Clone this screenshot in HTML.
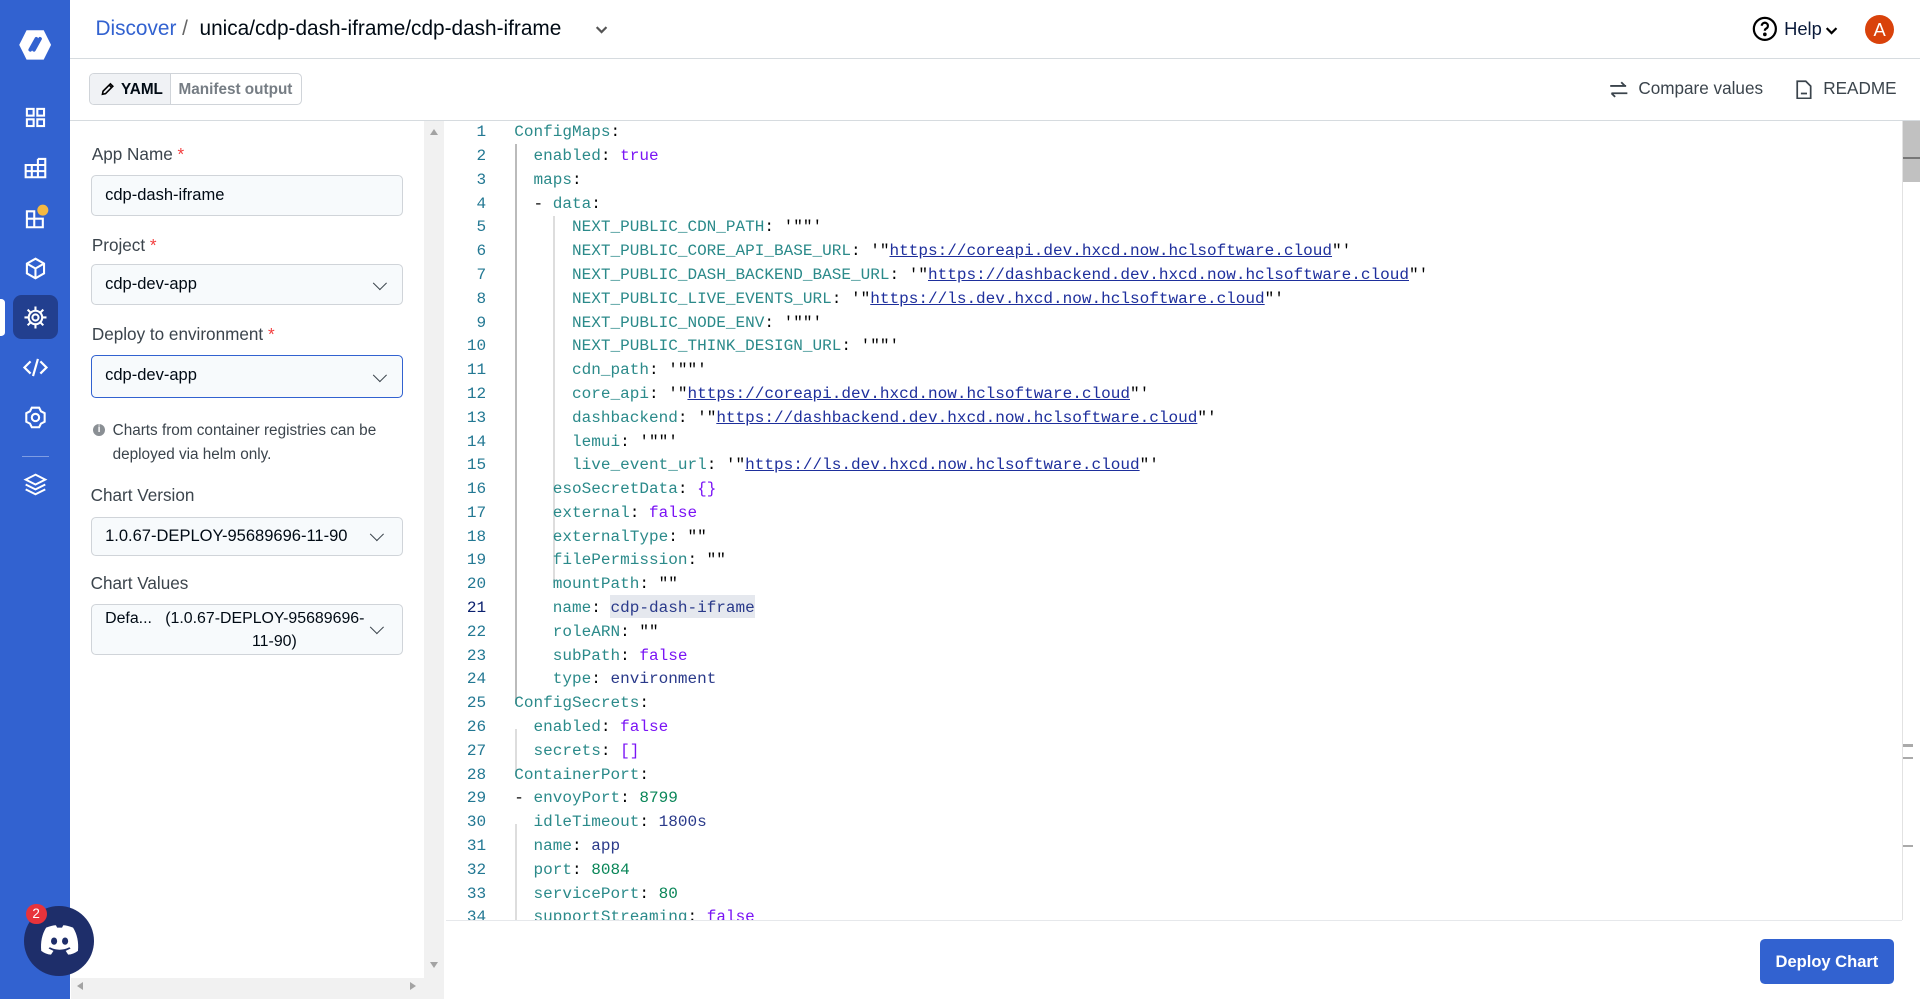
<!DOCTYPE html>
<html><head><meta charset="utf-8">
<style>
*{box-sizing:border-box;margin:0;padding:0}
html,body{width:1920px;height:999px;overflow:hidden;background:#fff}
#w{width:1568px;height:816px;position:relative;zoom:1.22449;font-family:"Liberation Sans",sans-serif;color:#000a14}
.abs{position:absolute}
#side{left:0;top:0;width:57px;height:816px;background:#3262d0}
.ic{position:absolute;left:18px;width:22px;height:22px}
#hdr{left:57px;top:0;right:0;height:48px;border-bottom:1px solid #d6dbdf}
#tb{left:57px;top:48px;right:0;height:51px;border-bottom:1px solid #d6dbdf}
.lbl{position:absolute;left:75px;font-size:14px;color:#3b444c}
.lbl b{color:#f33e3e;font-weight:normal}
.inp{position:absolute;left:74px;width:255px;border:1px solid #d0d4d9;border-radius:4px;background:#f7fafc;font-size:13.5px;color:#000a14;padding-left:11px}
.chev{position:absolute;right:14px;top:50%;width:8px;height:8px;border-right:1.6px solid #3b444c;border-bottom:1.6px solid #3b444c;transform:translateY(-70%) rotate(45deg)}
#code{left:364px;top:99px;width:1189px;height:652px;overflow:hidden;font-family:"Liberation Mono",monospace;font-size:13.1px}
.ln{position:absolute;left:0;width:33px;text-align:right;color:#237893}
.cl{position:absolute;left:56px;white-space:pre;color:#2b8a8a}
.k{color:#2b8a8a}.p{color:#000}.b{color:#7a14f5}.s{color:#2a3a8a}.n{color:#098658}.u{color:#1e2f9c;text-decoration:underline}
.g{position:absolute;width:1px;background:#bbb}
</style></head><body><div id="w">
<div id="side" class="abs">
 <svg class="abs" style="left:15px;top:24px" width="28" height="26" viewBox="0 0 28 26"><path d="M7 1h14l6 12-6 12H7L1 13z" fill="#fff"/><path d="M10 17l5-9M13 17l5-9" stroke="#3262d0" stroke-width="3" stroke-linecap="round"/></svg>
 <svg class="ic" style="top:85px" viewBox="0 0 22 22" fill="none" stroke="#fff" stroke-width="1.7"><rect x="4" y="4" width="5.5" height="5.5"/><rect x="12.5" y="4" width="5.5" height="5.5"/><rect x="4" y="12.5" width="5.5" height="5.5"/><rect x="12.5" y="12.5" width="5.5" height="5.5"/></svg>
 <svg class="ic" style="top:126px" viewBox="0 0 22 22" fill="none" stroke="#fff" stroke-width="1.7"><path d="M3 9h16v10H3zM3 14h16M8 9v10M13 9v10M13 4h6v5M13 4v5"/></svg>
 <svg class="ic" style="top:167px" viewBox="0 0 22 22" fill="none" stroke="#fff" stroke-width="1.7"><path d="M4 6h6v6H4zM10 12h7v7h-7zM4 12v7h6"/><circle cx="17" cy="5" r="4.5" fill="#f5b942" stroke="none"/></svg>
 <svg class="ic" style="top:208px" viewBox="0 0 22 22" fill="none" stroke="#fff" stroke-width="1.7"><path d="M11 3l7 4v8l-7 4-7-4V7zM4 7l7 4 7-4M11 11v8"/></svg>
 <div class="abs" style="left:0;top:244px;width:4px;height:30px;background:#fff;border-radius:0 3px 3px 0"></div>
 <div class="abs" style="left:11px;top:241px;width:36px;height:36px;background:#223f8f;border-radius:7px"></div>
 <svg class="ic" style="top:248px" viewBox="0 0 22 22" fill="none" stroke="#fff" stroke-width="1.7"><circle cx="11" cy="11" r="5.5"/><circle cx="11" cy="11" r="2.5"/><path d="M11 2v3.5M11 16.5V20M2 11h3.5M16.5 11H20M4.6 4.6l2.5 2.5M14.9 14.9l2.5 2.5M4.6 17.4l2.5-2.5M14.9 7.1l2.5-2.5"/></svg>
 <svg class="ic" style="top:289px" viewBox="0 0 22 22" fill="none" stroke="#fff" stroke-width="1.8"><path d="M7 6l-5 5 5 5M15 6l5 5-5 5M13 4l-4 14"/></svg>
 <svg class="ic" style="top:330px" viewBox="0 0 22 22" fill="none" stroke="#fff" stroke-width="1.7"><path d="M8 3h6l1.5 3 3 1.5v7l-3 1.5L14 19H8l-1.5-3-3-1.5v-7l3-1.5z"/><circle cx="11" cy="11" r="3"/></svg>
 <div class="abs" style="left:18px;top:372px;width:22px;height:1px;background:#7f9de3"></div>
 <svg class="ic" style="top:385px" viewBox="0 0 22 22" fill="none" stroke="#fff" stroke-width="1.6"><path d="M11 3l8 4-8 4-8-4zM3 11l8 4 8-4M3 15l8 4 8-4"/></svg>
 <div class="abs" style="left:20px;top:740px;width:57px;height:57px;border-radius:50%;background:#1e2e6a"></div>
 <svg class="abs" style="left:33px;top:755px" width="32" height="26" viewBox="0 0 32 26"><path d="M5 3q5-2 8-2l1 2h4l1-2q3 0 8 2 5 8 4 19-4 3-8 3l-2-3 4-2-1-1q-8 4-16 0l-1 1 4 2-2 3q-4 0-8-3Q0 11 5 3z" fill="#fff"/><ellipse cx="11.5" cy="14" rx="2.5" ry="3" fill="#1e2e6a"/><ellipse cx="20.5" cy="14" rx="2.5" ry="3" fill="#1e2e6a"/></svg>
 <div class="abs" style="left:21px;top:738px;width:17px;height:17px;border-radius:50%;background:#e8333b;color:#fff;font-size:11px;text-align:center;line-height:17px">2</div>
</div>
<div id="hdr" class="abs">
 <div class="abs" style="left:21px;top:14px;font-size:17px;white-space:nowrap"><span style="color:#3262d0">Discover</span> <span style="color:#666">/</span>&nbsp; <span style="color:#000a14">unica/cdp-dash-iframe/cdp-dash-iframe</span></div>
 <svg class="abs" style="left:427px;top:17px" width="14" height="14" viewBox="0 0 14 14" fill="none" stroke="#555" stroke-width="1.8"><path d="M3 5l4 4 4-4"/></svg>
 <svg class="abs" style="left:1374px;top:13px" width="21" height="21" viewBox="0 0 21 21" fill="none" stroke="#000" stroke-width="1.8"><circle cx="10.5" cy="10.5" r="9"/><path d="M8 8a2.5 2.5 0 1 1 3.5 2.3c-.7.4-1 .8-1 1.7"/><circle cx="10.5" cy="15" r=".6" fill="#000"/></svg>
 <div class="abs" style="left:1400px;top:15px;font-size:15px;color:#0a1a3a">Help</div>
 <svg class="abs" style="left:1432px;top:18px" width="14" height="14" viewBox="0 0 14 14" fill="none" stroke="#000" stroke-width="1.8"><path d="M3 5l4 4 4-4"/></svg>
 <div class="abs" style="left:1466px;top:12px;width:24px;height:24px;border-radius:50%;background:#d9420b;color:#fff;font-size:15px;text-align:center;line-height:24px">A</div>
</div>
<div id="tb" class="abs">
 <div class="abs" style="left:16px;top:12px;width:174px;height:26px;border:1px solid #d0d4d9;border-radius:4px;overflow:hidden;font-size:12.5px;white-space:nowrap">
  <div class="abs" style="left:0;top:0;width:66px;height:26px;background:#f0f2f5;border-right:1px solid #d0d4d9;font-weight:bold;padding:5px 0 0 25px;color:#000a14">YAML</div>
  <svg class="abs" style="left:8px;top:6px" width="12" height="12" viewBox="0 0 12 12" fill="none" stroke="#000" stroke-width="1.3"><path d="M2 10l.5-2.5 6-6 2 2-6 6zM7.5 2.5l2 2"/></svg>
  <div class="abs" style="left:72px;top:5px;color:#767d84;font-weight:bold">Manifest output</div>
 </div>
 <svg class="abs" style="left:1257px;top:18px" width="16" height="14" viewBox="0 0 16 14" fill="none" stroke="#3b444c" stroke-width="1.5"><path d="M1 4h13M10 1l3 3M15 10H2M5 13l-3-3"/></svg>
 <div class="abs" style="left:1281px;top:16px;font-size:14px;color:#3b444c">Compare values</div>
 <svg class="abs" style="left:1410px;top:17px" width="13" height="16" viewBox="0 0 13 16" fill="none" stroke="#3b444c" stroke-width="1.4"><path d="M1 1h7l4 4v10H1zM4 11h5"/></svg>
 <div class="abs" style="left:1432px;top:16px;font-size:14px;color:#3b444c">README</div>
</div>
<div class="lbl" style="top:118px">App Name <b>*</b></div>
<div class="inp" style="top:143px;height:33px;line-height:31px">cdp-dash-iframe</div>
<div class="lbl" style="top:192px">Project <b>*</b></div>
<div class="inp" style="top:216px;height:33px;line-height:31px">cdp-dev-app<span class="chev"></span></div>
<div class="lbl" style="top:265px">Deploy to environment <b>*</b></div>
<div class="inp" style="top:290px;height:35px;line-height:31px;border:1.5px solid #3262d0">cdp-dev-app<span class="chev"></span></div>
<div class="abs" style="left:76px;top:346px;width:10px;height:10px;border-radius:50%;background:#8a8f94;color:#fff;font-size:8px;text-align:center;line-height:10px;font-weight:bold">i</div>
<div class="abs" style="left:92px;top:342px;font-size:12.5px;color:#3b444c;line-height:20px;width:240px">Charts from container registries can be deployed via helm only.</div>
<div class="lbl" style="top:396px;left:74px">Chart Version</div>
<div class="inp" style="top:422px;height:32px;line-height:30px">1.0.67-DEPLOY-95689696-11-90<span class="chev" style="right:16px"></span></div>
<div class="lbl" style="top:468px;left:74px">Chart Values</div>
<div class="inp" style="top:493px;height:42px;font-size:13px;line-height:19px;padding-top:2px"><span>Defa...&nbsp;&nbsp;&nbsp;(1.0.67-DEPLOY-95689696-</span><br><span style="padding-left:120px">11-90)</span><span class="chev" style="right:16px"></span></div>
<div class="abs" style="left:346px;top:99px;width:17px;height:717px;background:#f1f1f1"></div>
<div class="abs" style="left:351px;top:105px;width:0;height:0;border:4px solid transparent;border-bottom:5px solid #a3a3a3;border-top:0"></div>
<div class="abs" style="left:351px;top:786px;width:0;height:0;border:4px solid transparent;border-top:5px solid #a3a3a3;border-bottom:0"></div>
<div class="abs" style="left:58px;top:799px;width:288px;height:17px;background:#f1f1f1"></div>
<div class="abs" style="left:63px;top:802px;border:4px solid transparent;border-right:5px solid #a3a3a3;border-left:0"></div>
<div class="abs" style="left:335px;top:802px;border:4px solid transparent;border-left:5px solid #a3a3a3;border-right:0"></div>
<div id="code" class="abs">
<div class="g" style="left:57px;top:19px;height:457px"></div>
<div class="g" style="left:88px;top:77px;height:300px;background:#ddd"></div>
<div class="g" style="left:57px;top:496px;height:39px;background:#ddd"></div>
<div class="g" style="left:57px;top:574px;height:78px;background:#ddd"></div>
<div class="abs" style="left:134px;top:387px;width:119px;height:19px;background:#e5e8ee"></div>
</div>
<div class="abs" style="left:364px;top:751px;width:1189px;height:1px;background:#e6e8eb"></div>
<div class="abs" style="left:1553px;top:99px;width:15px;height:652px;border-left:1px solid #e2e2e2"></div>
<div class="abs" style="left:1554px;top:99px;width:14px;height:50px;background:#c1c1c1"></div>
<div class="abs" style="left:1554px;top:128px;width:14px;height:2px;background:#777"></div>
<div class="abs" style="left:1554px;top:608px;width:8px;height:2px;background:#aaa"></div>
<div class="abs" style="left:1554px;top:618px;width:8px;height:2px;background:#aaa"></div>
<div class="abs" style="left:1554px;top:690px;width:8px;height:2px;background:#aaa"></div>
<div class="abs" style="left:1437px;top:767px;width:110px;height:37px;background:#3262d0;border-radius:4px;color:#fff;font-size:13.5px;font-weight:bold;text-align:center;line-height:37px">Deploy Chart</div>
<script>
var L=[
'<span class="k">ConfigMaps</span><span class="p">:</span>',
'  <span class="k">enabled</span><span class="p">:</span> <span class="b">true</span>',
'  <span class="k">maps</span><span class="p">:</span>',
'  <span class="p">-</span> <span class="k">data</span><span class="p">:</span>',
'      <span class="k">NEXT_PUBLIC_CDN_PATH</span><span class="p">: \'""\'</span>',
'      <span class="k">NEXT_PUBLIC_CORE_API_BASE_URL</span><span class="p">: \'"</span><span class="u">https://coreapi.dev.hxcd.now.hclsoftware.cloud</span><span class="p">"\'</span>',
'      <span class="k">NEXT_PUBLIC_DASH_BACKEND_BASE_URL</span><span class="p">: \'"</span><span class="u">https://dashbackend.dev.hxcd.now.hclsoftware.cloud</span><span class="p">"\'</span>',
'      <span class="k">NEXT_PUBLIC_LIVE_EVENTS_URL</span><span class="p">: \'"</span><span class="u">https://ls.dev.hxcd.now.hclsoftware.cloud</span><span class="p">"\'</span>',
'      <span class="k">NEXT_PUBLIC_NODE_ENV</span><span class="p">: \'""\'</span>',
'      <span class="k">NEXT_PUBLIC_THINK_DESIGN_URL</span><span class="p">: \'""\'</span>',
'      <span class="k">cdn_path</span><span class="p">: \'""\'</span>',
'      <span class="k">core_api</span><span class="p">: \'"</span><span class="u">https://coreapi.dev.hxcd.now.hclsoftware.cloud</span><span class="p">"\'</span>',
'      <span class="k">dashbackend</span><span class="p">: \'"</span><span class="u">https://dashbackend.dev.hxcd.now.hclsoftware.cloud</span><span class="p">"\'</span>',
'      <span class="k">lemui</span><span class="p">: \'""\'</span>',
'      <span class="k">live_event_url</span><span class="p">: \'"</span><span class="u">https://ls.dev.hxcd.now.hclsoftware.cloud</span><span class="p">"\'</span>',
'    <span class="k">esoSecretData</span><span class="p">:</span> <span class="b">{}</span>',
'    <span class="k">external</span><span class="p">:</span> <span class="b">false</span>',
'    <span class="k">externalType</span><span class="p">: ""</span>',
'    <span class="k">filePermission</span><span class="p">: ""</span>',
'    <span class="k">mountPath</span><span class="p">: ""</span>',
'    <span class="k">name</span><span class="p">:</span> <span class="s">cdp-dash-iframe</span>',
'    <span class="k">roleARN</span><span class="p">: ""</span>',
'    <span class="k">subPath</span><span class="p">:</span> <span class="b">false</span>',
'    <span class="k">type</span><span class="p">:</span> <span class="s">environment</span>',
'<span class="k">ConfigSecrets</span><span class="p">:</span>',
'  <span class="k">enabled</span><span class="p">:</span> <span class="b">false</span>',
'  <span class="k">secrets</span><span class="p">:</span> <span class="b">[]</span>',
'<span class="k">ContainerPort</span><span class="p">:</span>',
'<span class="p">-</span> <span class="k">envoyPort</span><span class="p">:</span> <span class="n">8799</span>',
'  <span class="k">idleTimeout</span><span class="p">:</span> <span class="s">1800s</span>',
'  <span class="k">name</span><span class="p">:</span> <span class="s">app</span>',
'  <span class="k">port</span><span class="p">:</span> <span class="n">8084</span>',
'  <span class="k">servicePort</span><span class="p">:</span> <span class="n">80</span>',
'  <span class="k">supportStreaming</span><span class="p">:</span> <span class="b">false</span>'];
var c=document.getElementById('code'),h='';
for(var i=0;i<L.length;i++){var t=i*19.43;h+='<div class="ln" style="top:'+t+'px;line-height:19.4px'+(i==20?';color:#0b216f':'')+'">'+(i+1)+'</div><div class="cl" style="top:'+t+'px;line-height:19.4px">'+L[i]+'</div>';}
c.insertAdjacentHTML('beforeend',h);
</script>
</div></body></html>
